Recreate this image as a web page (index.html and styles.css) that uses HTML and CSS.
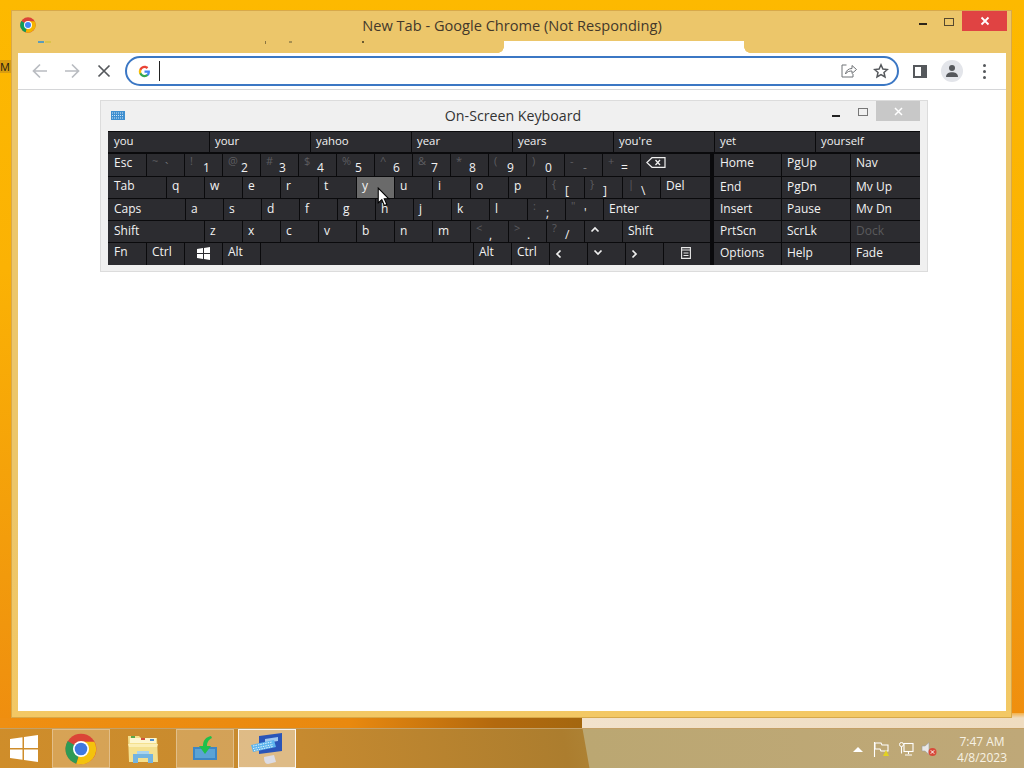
FILE: index.html
```html
<!DOCTYPE html>
<html lang="en">
<head>
<meta charset="utf-8">
<title>New Tab - Google Chrome (Not Responding)</title>
<link rel="stylesheet" href="styles.css">
</head>
<body>
<div class="desktop">
  <div class="wall-glow"></div>
  <div class="wall-dark"></div>
  <div class="desk-label">M</div>

  <section class="chrome-win">
    <header class="titlebar">
      <svg class="chrome-logo" width="16" height="16" viewBox="0 0 48 48"><circle cx="24" cy="24" r="23" fill="#db4437"/><path d="M24 24 L4 12 A23 23 0 0 0 17 46 Z" fill="#0f9d58"/><path d="M24 24 L17 46 A23 23 0 0 0 44 13 L24 13 Z" fill="#f4b400"/><circle cx="24" cy="24" r="12" fill="#fff"/><circle cx="24" cy="24" r="9" fill="#4285f4"/></svg>
      <div class="win-title">New Tab - Google Chrome (Not Responding)</div>
      <div class="caption">
        <span class="cap-min"></span>
        <span class="cap-max"></span>
        <span class="cap-close">
          <svg width="10" height="10" viewBox="0 0 10 10"><path d="M1.5 1.5l7 7M8.5 1.5l-7 7" stroke="#fff" stroke-width="1.8"/></svg>
        </span>
      </div>
    </header>
    <div class="tabstrip">
      <span class="speck sp1"></span><span class="speck sp2"></span><span class="speck sp3"></span><span class="speck sp4"></span><span class="speck sp5"></span>
      <div class="tab-active"></div>
    </div>
    <div class="toolbar">
      <svg class="tb-btn" width="18" height="18" viewBox="0 0 18 18"><path d="M16 9H3M9 2.5L2.5 9 9 15.500" fill="none" stroke="#b9bcc1" stroke-width="1.700"/></svg>
      <svg class="tb-btn" width="18" height="18" viewBox="0 0 18 18"><path d="M2 9h13M9 2.500L15.500 9 9 15.500" fill="none" stroke="#b9bcc1" stroke-width="1.700"/></svg>
      <svg class="tb-btn" width="18" height="18" viewBox="0 0 18 18"><path d="M3.500 3.500l11 11M14.500 3.500l-11 11" fill="none" stroke="#55585c" stroke-width="1.700"/></svg>
      <div class="omnibox">
        <svg class="g-logo" width="13" height="13" viewBox="0 0 48 48"><path d="M44 24.500c0-1.500-.1-2.900-.4-4.300H24v8.200h11.300c-.5 2.600-2 4.900-4.200 6.400v5.300h6.800c4-3.700 6.100-9.100 6.100-15.600z" fill="#4285f4"/><path d="M24 45c5.700 0 10.500-1.900 13.900-5.100l-6.800-5.300c-1.900 1.300-4.300 2-7.100 2-5.500 0-10.100-3.700-11.800-8.600H5.200v5.400C8.700 39.800 15.800 45 24 45z" fill="#34a853"/><path d="M12.200 28c-.9-2.600-.9-5.400 0-8v-5.400h-7c-3 5.900-3 12.900 0 18.800z" fill="#fbbc05"/><path d="M24 11.300c3.100 0 5.800 1.100 8 3.100l6-6C34.400 5 29.600 3 24 3 15.800 3 8.700 8.200 5.200 14.600l7 5.400c1.700-5 6.300-8.700 11.800-8.700z" fill="#ea4335"/></svg>
        <span class="caret"></span>
        <svg class="omni-share" width="16" height="16" viewBox="0 0 16 16"><path d="M5.500 2H1v12h11v-3" fill="none" stroke="#6f7276" stroke-width="1"/><path d="M4.500 11c.5-3.500 3-5.500 6.500-5.500V2.500l4.500 4-4.500 4V8c-2.500 0-5 .5-6.500 3z" fill="none" stroke="#6f7276" stroke-width="1"/></svg>
        <svg class="omni-star" width="16" height="16" viewBox="0 0 16 16"><path d="M8 1.800l1.900 4.200 4.500.5-3.400 3 1 4.500L8 11.700 4 14l1-4.500-3.400-3 4.500-.5z" fill="none" stroke="#55585c" stroke-width="1.500"/></svg>
      </div>
      <span class="side-panel"></span>
      <span class="avatar">
        <svg width="14" height="14" viewBox="0 0 14 14"><circle cx="7" cy="4" r="3" fill="#55585c"/><path d="M1 13c0-3.500 3-4.700 6-4.700s6 1.200 6 4.700z" fill="#55585c"/></svg>
      </span>
      <span class="kebab"><i></i><i></i><i></i></span>
    </div>
    <main class="page"></main>
  </section>

  <section class="osk">
    <header class="osk-title">
      <svg class="osk-icon" width="14" height="9" viewBox="0 0 14 9"><rect width="14" height="9" fill="#3f8fd0"/><path d="M1 2h12M1 4.500h12M1 7h12" stroke="#cfe6f7" stroke-width="1" stroke-dasharray="1 1"/></svg>
      <div class="osk-name">On-Screen Keyboard</div>
      <div class="osk-caption">
        <span class="osk-min"></span>
        <span class="osk-max"></span>
        <span class="osk-close">
          <svg width="9" height="9" viewBox="0 0 9 9"><path d="M1 1l7 7M8 1l-7 7" stroke="#fff" stroke-width="1.500"/></svg>
        </span>
      </div>
    </header>
    <div class="kbd">
      <div class="words">
        <span class="word">you</span><span class="word">your</span><span class="word">yahoo</span><span class="word">year</span><span class="word">years</span><span class="word">you're</span><span class="word">yet</span><span class="word">yourself</span>
      </div>
      <div class="board">
        <div class="main-keys">
          <div class="row r2">
            <span class="key k38">Esc</span>
            <span class="key sym dim"><em>~</em><b>`</b></span>
            <span class="key sym"><em>!</em><b>1</b></span>
            <span class="key sym"><em>@</em><b>2</b></span>
            <span class="key sym"><em>#</em><b>3</b></span>
            <span class="key sym"><em>$</em><b>4</b></span>
            <span class="key sym"><em>%</em><b>5</b></span>
            <span class="key sym"><em>^</em><b>6</b></span>
            <span class="key sym"><em>&amp;</em><b>7</b></span>
            <span class="key sym"><em>*</em><b>8</b></span>
            <span class="key sym"><em>(</em><b>9</b></span>
            <span class="key sym"><em>)</em><b>0</b></span>
            <span class="key sym dim"><em>-</em><b>-</b></span>
            <span class="key sym"><em>+</em><b>=</b></span>
            <span class="key grow">
              <svg class="bksp" width="20" height="11" viewBox="0 0 20 11"><path d="M6 .7h13v9.600H6L.8 5.500z" fill="none" stroke="#f0f0f0" stroke-width="1.200"/><path d="M9.500 3l4.500 5M14 3l-4.500 5" stroke="#f0f0f0" stroke-width="1.300"/></svg>
            </span>
          </div>
          <div class="row">
            <span class="key k58">Tab</span>
            <span class="key let">q</span><span class="key let">w</span><span class="key let">e</span><span class="key let">r</span><span class="key let">t</span><span class="key let hot">y</span><span class="key let">u</span><span class="key let">i</span><span class="key let">o</span><span class="key let">p</span>
            <span class="key sym"><em>{</em><b>[</b></span>
            <span class="key sym"><em>}</em><b>]</b></span>
            <span class="key sym"><em>|</em><b>\</b></span>
            <span class="key grow">Del</span>
          </div>
          <div class="row low-row">
            <span class="key k77">Caps</span>
            <span class="key let">a</span><span class="key let">s</span><span class="key let">d</span><span class="key let">f</span><span class="key let">g</span><span class="key let">h</span><span class="key let">j</span><span class="key let">k</span><span class="key let">l</span>
            <span class="key sym"><em>:</em><b>;</b></span>
            <span class="key sym"><em>"</em><b>'</b></span>
            <span class="key grow">Enter</span>
          </div>
          <div class="row low-row">
            <span class="key k96">Shift</span>
            <span class="key let">z</span><span class="key let">x</span><span class="key let">c</span><span class="key let">v</span><span class="key let">b</span><span class="key let">n</span><span class="key let">m</span>
            <span class="key sym"><em>&lt;</em><b>,</b></span>
            <span class="key sym"><em>&gt;</em><b>.</b></span>
            <span class="key sym"><em>?</em><b>/</b></span>
            <span class="key let arrow up-arrow"><svg width="10" height="7" viewBox="0 0 10 7"><path d="M1.500 5.500L5 2l3.500 3.500" fill="none" stroke="#f0f0f0" stroke-width="1.700"/></svg></span>
            <span class="key grow">Shift</span>
          </div>
          <div class="row r6">
            <span class="key k38">Fn</span>
            <span class="key k37">Ctrl</span>
            <span class="key k37 win-key"><svg width="13" height="13" viewBox="0 0 13 13"><path d="M0 2l6-.9V6H0zM7 1l6-1v6H7zM0 7h6v4.900L0 11zM7 7h6v6l-6-1z" fill="#fff"/></svg></span>
            <span class="key k37">Alt</span>
            <span class="key k212"></span>
            <span class="key k37">Alt</span>
            <span class="key k37">Ctrl</span>
            <span class="key let arrow"><svg width="7" height="10" viewBox="0 0 7 10"><path d="M5.500 1.500L2 5l3.500 3.500" fill="none" stroke="#f0f0f0" stroke-width="1.700"/></svg></span>
            <span class="key let arrow up-arrow"><svg width="10" height="7" viewBox="0 0 10 7"><path d="M1.500 1.500L5 5l3.500-3.500" fill="none" stroke="#f0f0f0" stroke-width="1.700"/></svg></span>
            <span class="key let arrow"><svg width="7" height="10" viewBox="0 0 7 10"><path d="M1.500 1.500L5 5 1.500 8.500" fill="none" stroke="#f0f0f0" stroke-width="1.700"/></svg></span>
            <span class="key grow menu-key"><svg width="10" height="12" viewBox="0 0 10 12"><path d="M.6.600h8.800v10.800H.6zM.6 3h8.800M2.500 6h5M2.500 8.500h5" fill="none" stroke="#e8e8e8" stroke-width="1.100"/></svg></span>
          </div>
        </div>
        <div class="nav-keys">
          <span class="key">Home</span><span class="key">PgUp</span><span class="key">Nav</span>
          <span class="key">End</span><span class="key">PgDn</span><span class="key">Mv Up</span>
          <span class="key">Insert</span><span class="key">Pause</span><span class="key">Mv Dn</span>
          <span class="key">PrtScn</span><span class="key">ScrLk</span><span class="key off">Dock</span>
          <span class="key low">Options</span><span class="key low">Help</span><span class="key low">Fade</span>
        </div>
      </div>
    </div>
  </section>
  <svg class="cursor" width="13" height="20" viewBox="0 0 12 19"><path d="M1 1v14l3.400-3 2.400 5.500 2.300-1-2.400-5.300H11z" fill="#fff" stroke="#000" stroke-width="1"/></svg>

  <footer class="taskbar">
    <svg class="start" width="28" height="27" viewBox="0 0 28 27"><path d="M0 4l12.500-1.800V13H0zM14 2l14-2v13H14zM0 14.500h12.500v10.300L0 23zM14 14.500h14V27l-14-2z" fill="#fff"/></svg>
    <div class="tb-apps">
      <span class="app boxed">
        <svg width="32" height="32" viewBox="0 0 48 48"><circle cx="24" cy="24" r="23" fill="#db4437"/><path d="M24 24 L4 12 A23 23 0 0 0 17 46 Z" fill="#2e9a55"/><path d="M24 24 L17 46 A23 23 0 0 0 44 13 L24 13 Z" fill="#f4c20d"/><circle cx="24" cy="24" r="12" fill="#fff"/><circle cx="24" cy="24" r="9.500" fill="#3f78e0"/></svg>
      </span>
      <span class="app">
        <svg width="32" height="30" viewBox="0 0 32 30"><path d="M1 2h11l2 2h16l1 24H2z" fill="#f4e08e"/><path d="M3 4h26v5H3z" fill="#fdf6d0"/><rect x="4" y="2" width="4" height="2" fill="#59a84a"/><rect x="14" y="4" width="4" height="2" fill="#d2503c"/><rect x="23" y="5" width="4" height="2" fill="#4f8fd0"/><path d="M1 10h30l-1 3H2z" fill="#fbeeb4"/><path d="M6 20h20v9h-5v-5H11v5H6z" fill="#74b4e0"/><path d="M10 17h12v3H10z" fill="#a9d3ee"/></svg>
      </span>
      <span class="app boxed">
        <svg width="26" height="26" viewBox="0 0 26 26"><rect x="1" y="11" width="24" height="13" fill="#3d86c4"/><rect x="3" y="13" width="20" height="9" fill="#5ba3d4"/><path d="M19 0c-5 1-8 4-8 10H7l6 8 6-8h-4c0-3 1-6 5-8z" fill="#1fc04a"/></svg>
      </span>
      <span class="app active">
        <svg width="34" height="32" viewBox="0 0 34 32"><path d="M9 3l23-3v18L9 21z" fill="#2a55b8"/><path d="M15 6l13-2v4l-13 2z" fill="#9fc7ef"/><path d="M14 24l10-2 2 7-8 2c-3 0-4-3-4-7z" fill="#dcdce4"/><path d="M1 12l23-5 2 7-23 5z" fill="#5db5ee"/><path d="M3 13l19-4M3 15.500l20-4M4 17.500l19-4" stroke="#e4f3fc" stroke-width="1" stroke-dasharray="1.500 1"/></svg>
      </span>
    </div>
    <div class="tray">
      <svg width="10" height="6" viewBox="0 0 10 6" class="tray-up"><path d="M0 6l5-5 5 5z" fill="#fff"/></svg>
      <svg width="16" height="16" viewBox="0 0 16 16" class="tray-flag"><path d="M1.500 1v15M2 2h6l1 2h6v6H8l-1-2H2z" fill="none" stroke="#fff" stroke-width="1.100"/><path d="M10 15l3-6 3 6z" fill="#e3d120"/></svg>
      <svg width="16" height="16" viewBox="0 0 16 16" class="tray-net"><rect x="6" y="2.500" width="9" height="8" fill="none" stroke="#fff" stroke-width="1.100"/><path d="M10.500 10.500v2.500M7 14h7" stroke="#fff" stroke-width="1.100"/><circle cx="3.500" cy="3.500" r="2" fill="none" stroke="#fff"/><path d="M3.500 5.500v7" stroke="#fff" stroke-width="1.100"/></svg>
      <svg width="16" height="16" viewBox="0 0 16 16" class="tray-snd"><path d="M1 5h3l4-3.500v12L4 10H1z" fill="#e8e8e8" stroke="#9a9a9a" stroke-width=".6"/><circle cx="11.500" cy="11" r="4" fill="#d84a3a"/><path d="M9.800 9.300l3.400 3.400M13.200 9.300l-3.400 3.400" stroke="#fff" stroke-width="1"/></svg>
      <div class="clock"><div>7:47 AM</div><div>4/8/2023</div></div>
    </div>
  </footer>
</div>
</body>
</html>
```
FILE: styles.css
```css
* { box-sizing: border-box; }
html, body { margin: 0; padding: 0; }
body { width: 1024px; height: 768px; overflow: hidden; font-family: "Open Sans", "Noto Sans", sans-serif; }

.desktop {
  position: relative;
  width: 1024px;
  height: 768px;
  overflow: hidden;
  background: linear-gradient(180deg, #fdb900 0%, #fbb204 35%, #f29a0c 75%, #ee8a10 100%);
}
.wall-glow {
  position: absolute;
  left: 581px; right: 0; top: 718px; height: 10px;
  background: linear-gradient(90deg, #f2e2cc 0%, #efdcc0 100%);
}
.wall-glow::after {
  content: "";
  position: absolute; right: 0; bottom: 10px; width: 12px; height: 5px;
  background: linear-gradient(180deg, #f2b04a, #efdcc0);
}
.wall-dark { position: absolute; left: 0; top: 718px; width: 582px; height: 10px; background: linear-gradient(90deg, #ef8f12 0%, #e9890f 60%, #b3690e 85%, #a4670f 100%); }
.desk-label {
  position: absolute; left: 0; top: 60px; width: 11px; height: 13px;
  background: #d99d10; color: #1e1a10; font-size: 11px; line-height: 13px; overflow: hidden;
}

/* Chrome window */
.chrome-win {
  position: absolute;
  left: 11px; top: 10px; width: 1001px; height: 708px;
  background: linear-gradient(180deg, #ecc66a 0%, #ecc66a 70%, #f3c864 100%);
  border: 1px solid #d8a94a;
  display: flex; flex-direction: column;
  padding: 0 5px 6px 6px;
}
.titlebar { display: flex; align-items: flex-start; height: 30px; position: relative; flex: none; }
.chrome-logo { position: absolute; left: 2px; top: 6px; }
.win-title { flex: 1; text-align: center; font-size: 14.6px; line-height: 29px; color: #43382a; }
.caption { position: absolute; right: -1px; top: 0; display: flex; align-items: flex-start; }
.cap-min { width: 8px; height: 2px; background: #2d2418; margin: 12px 17px 0 0; }
.cap-max { width: 10px; height: 8px; border: 1px solid #55482f; margin: 7px 8px 0 0; }
.cap-close { width: 45px; height: 20px; background: #e04343; display: flex; align-items: center; justify-content: center; }
.tabstrip { height: 12px; flex: none; position: relative; }
.speck { position: absolute; top: 0; height: 2px; }
.sp1 { left: 20px; width: 6px; background: #5c9cb8; }
.sp2 { left: 27px; width: 6px; background: #dcc24a; }
.sp3 { left: 247px; width: 1px; height: 3px; background: #8a7440; }
.sp4 { left: 271px; width: 3px; background: #a89050; }
.sp5 { left: 344px; width: 2px; background: #6a5a30; }
.tab-active { position: absolute; left: 486px; top: 0; width: 240px; height: 12px; background: #fff; }
.tab-active::before, .tab-active::after {
  content: ""; position: absolute; bottom: 0; width: 6px; height: 6px;
}
.tab-active::before { right: 100%; background: radial-gradient(circle at 0 0, #ecc66a 5.5px, #fff 6px); }
.tab-active::after { left: 100%; background: radial-gradient(circle at 100% 0, #ecc66a 5.5px, #fff 6px); }
.toolbar {
  height: 37px; flex: none; background: #fff; border-bottom: 1px solid #d5d6d8;
  display: flex; align-items: center; padding: 0 19px 0 13px;
}
.tb-btn { margin-right: 14px; }
.tb-btn:nth-child(3) { margin-right: 12px; }
.omnibox {
  flex: 1; height: 30px; border: 2px solid #3b77c4; border-radius: 15px;
  display: flex; align-items: center; padding: 0 8px 0 11px;
}
.g-logo { flex: none; }
.caret { width: 1px; height: 20px; background: #222; margin-left: 8px; }
.omni-share { margin-left: auto; }
.omni-star { margin-left: 16px; }
.side-panel { width: 14px; height: 13px; border: 2px solid #55585c; border-right-width: 6px; margin: 0 14px; flex: none; }
.avatar { width: 22px; height: 22px; border-radius: 50%; background: #e3e5ea; display: flex; align-items: center; justify-content: center; margin-right: 20px; flex: none; }
.kebab { display: flex; flex-direction: column; gap: 3px; width: 4px; flex: none; }
.kebab i { width: 3px; height: 3px; border-radius: 50%; background: #55585c; display: block; }
.page { flex: 1; background: #fff; }

/* On-screen keyboard */
.osk {
  position: absolute;
  left: 100px; top: 100px; width: 828px; height: 172px;
  background: #f0f0f0;
  border: 1px solid #dcdcdc;
  padding: 0 7px;
}
.osk-title { height: 30px; position: relative; }
.osk-icon { position: absolute; left: 3px; top: 10px; }
.osk-name { text-align: center; font-size: 14.2px; line-height: 29px; color: #333; padding-right: 2px; }
.osk-caption { position: absolute; right: 0; top: 0; display: flex; align-items: flex-start; }
.osk-min { width: 8px; height: 2px; background: #222; margin: 14px 18px 0 0; }
.osk-max { width: 10px; height: 8px; border: 1px solid #777; margin: 7px 8px 0 0; }
.osk-close { width: 44px; height: 20px; background: #c8c8c8; display: flex; align-items: center; justify-content: center; }

.kbd { width: 812px; background: #0a0a0c; color: #f2f2f2; font-size: 12px; display: flex; flex-direction: column; }
.words { display: flex; height: 23px; gap: 1px; padding: 1px 0 2px; font-size: 11.4px; }
.word { width: 100px; flex: none; background: #2c2c30; padding-left: 5px; line-height: 18px; }
.word:first-child { width: 101px; padding-left: 6px; }
.word:last-child { flex: 1; }
.board { display: flex; gap: 4px; }
.main-keys { width: 602px; flex: none; display: flex; flex-direction: column; gap: 1px; }
.row { display: flex; gap: 1px; height: 21px; }
.r2 { height: 22px; }
.r6 { height: 22px; }
.key { display: block; background: #2c2c30; padding-left: 5px; line-height: 18px; position: relative; overflow: hidden; white-space: nowrap; }
.row .key:first-child { padding-left: 6px; }
.low-row .key { padding-top: 1px; }
.k37 { width: 37px; flex: none; }
.k38 { width: 38px; flex: none; }
.k58 { width: 58px; flex: none; }
.k77 { width: 77px; flex: none; }
.k96 { width: 96px; flex: none; }
.k212 { width: 212px; flex: none; }
.grow { flex: 1; }
.let { width: 37px; flex: none; padding-left: 5px; }
.hot { background: #6a6a6a; }
.sym { width: 37px; flex: none; padding: 0; }
.sym em { position: absolute; left: 5px; top: -2px; font-style: normal; font-size: 11px; color: #5d5d60; }
.sym b { position: absolute; left: 18px; top: 5px; font-weight: 400; font-size: 12px; }
.dim b { color: #77777a; }
.arrow { display: flex; align-items: center; padding-left: 5px; }
.up-arrow, .low-row .up-arrow { padding-top: 0; padding-bottom: 4px; }
.bksp { position: absolute; left: 5px; top: 3px; }
.win-key { padding: 4px 0 0 12px; }
.menu-key { padding: 3px 0 0 17px; }
.nav-keys { flex: 1; display: grid; grid-template-columns: 67px 68px 1fr; grid-template-rows: 22px 21px 21px 21px 22px; gap: 1px; }
.nav-keys .key { padding-left: 5px; }
.nav-keys .key:nth-child(3n+1) { padding-left: 6px; }
.nav-keys .key:nth-child(n+4) { padding-top: 1px; }
.nav-keys .off { color: #5a5a5c; }

.cursor { position: absolute; left: 377px; top: 187px; }

/* Taskbar */
.taskbar {
  position: absolute; left: 0; right: 0; bottom: 0; height: 40px;
  background: linear-gradient(80deg, #cf8d2a 0, #c68a30 300px, #ac7d2e 560px, #ad8133 580px, #bba772 581px, #bfa878 100%);
  border-top: 1px solid #c4a066;
  display: flex; align-items: center;
}
.start { margin-left: 10px; flex: none; }
.tb-apps { display: flex; gap: 4px; margin-left: 14px; }
.app { width: 58px; height: 39px; display: flex; align-items: center; justify-content: center; border: 1px solid transparent; }
.boxed { background: rgba(255,255,255,.2); border-color: rgba(255,255,255,.3); }
.active { background: rgba(255,255,255,.42); border-color: rgba(255,255,255,.85); }
.tray { margin-left: auto; display: flex; align-items: center; height: 100%; padding-right: 17px; color: #f7f2e4; font-size: 12px; }
.tray-up { margin-right: 10px; }
.tray-flag { margin-right: 9px; }
.tray-net { margin-right: 7px; }
.clock { margin-left: 20px; text-align: center; line-height: 16px; padding-top: 2px; }
```
